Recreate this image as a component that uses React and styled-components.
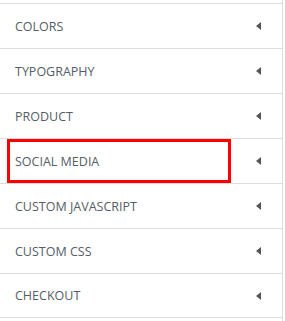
import React from "react";
import styled, { createGlobalStyle } from "styled-components";

const GlobalStyle = createGlobalStyle`
  body {
    margin: 0;
    background: #fff;
    font-family: "Open Sans", "Liberation Sans", sans-serif;
  }
`;

const Panel = styled.ul`
  list-style: none;
  margin: 0;
  padding: 3px 0 0;
  width: 283px;
  border-right: 1px solid #dddddd;
  min-height: 321px;
  box-sizing: border-box;
`;

const Item = styled.li`
  position: relative;
  display: flex;
  align-items: center;
  height: 45px;
  box-sizing: border-box;
  border-top: 1px solid #dddddd;
  padding: 0 21px 0 15px;
  color: #555d66;
  font-size: 12.5px;
  text-transform: uppercase;
  cursor: pointer;

  &:last-child {
    border-bottom: 1px solid #dddddd;
  }
`;

const Label = styled.span`
  flex: 1 1 auto;
`;

const Arrow = styled.span`
  width: 0;
  height: 0;
  border-top: 4.5px solid transparent;
  border-bottom: 4.5px solid transparent;
  border-right: 5px solid #555;
`;

const Highlight = styled.div`
  position: absolute;
  left: 7px;
  top: 0;
  width: 224px;
  height: 44px;
  border: 3px solid #ff0000;
  box-sizing: border-box;
  pointer-events: none;
`;

const sections = [
  "Colors",
  "Typography",
  "Product",
  "Social Media",
  "Custom JavaScript",
  "Custom CSS",
  "Checkout",
];

export default function App() {
  return (
    <>
      <GlobalStyle />
      <Panel>
        {sections.map((s) => (
          <Item key={s}>
            <Label>{s}</Label>
            <Arrow />
            {s === "Social Media" && <Highlight />}
          </Item>
        ))}
      </Panel>
    </>
  );
}
